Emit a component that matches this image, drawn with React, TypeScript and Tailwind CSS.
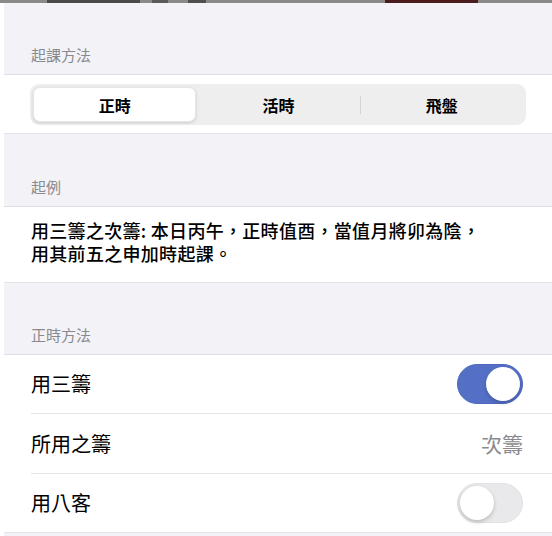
import { useState } from "react";

const FONT = {
  fontFamily: '"Noto Sans CJK TC", "Noto Sans", "Liberation Sans", sans-serif',
};

function SectionHeader({ title, tall = 72 }: { title: string; tall?: number }) {
  return (
    <div
      className="flex items-end bg-[#f2f2f7] px-[27px] pb-[8px] text-[15px] leading-[22px] text-[#8a8a8e] border-b border-[#dedee3]"
      style={{ height: tall }}
    >
      {title}
    </div>
  );
}

function Toggle({ on, onChange }: { on: boolean; onChange: (v: boolean) => void }) {
  return (
    <button
      onClick={() => onChange(!on)}
      className={
        on
          ? "relative h-[40px] w-[66px] rounded-full bg-[#5470c6] border border-[#4f69bf]"
          : "relative h-[40px] w-[66px] rounded-full bg-[#e9e9eb] border border-[#e2e2e4]"
      }
    >
      <span
        className={
          on
            ? "absolute top-[2px] right-[2px] h-[34px] w-[34px] rounded-full bg-white shadow-[0_2px_4px_rgba(0,0,0,0.2)]"
            : "absolute top-[2px] left-[2px] h-[34px] w-[34px] rounded-full bg-white shadow-[0_2px_4px_rgba(0,0,0,0.2)]"
        }
      />
    </button>
  );
}

const SEGMENTS = ["正時", "活時", "飛盤"];

export default function App() {
  const [seg, setSeg] = useState(0);
  const [useThree, setUseThree] = useState(true);
  const [useEight, setUseEight] = useState(false);

  return (
    <div className="h-[536px] w-[552px] overflow-hidden bg-white" style={FONT}>
      {/* 上端に見切れた画像の帯 */}
      <div className="flex h-[3px] bg-[#8a8a8a]">
        <div className="ml-[47px] w-[93px] bg-[#4a4a4a]" />
        <div className="ml-[12px] w-[16px] bg-[#5a5a5a]" />
        <div className="ml-[20px] w-[18px] bg-[#4f4f4f]" />
        <div className="ml-[179px] w-[93px] bg-[#4a1c1c]" />
      </div>

      <div className="ml-[4px]">
        <SectionHeader title="起課方法" tall={72} />
        <div className="bg-white px-[26px] pt-[9px] pb-[8px] border-b border-[#e4e4e8]">
          <div className="flex h-[41px] items-center rounded-[9px] bg-[#eeeeef] p-[3px]">
            {SEGMENTS.map((s, i) => (
              <div key={s} className="flex h-full flex-1 items-center">
                {i > 0 && (
                  <div
                    className={
                      seg === i || seg === i - 1
                        ? "h-[18px] w-px bg-transparent"
                        : "h-[18px] w-px bg-[#d4d4d6]"
                    }
                  />
                )}
                <button
                  onClick={() => setSeg(i)}
                  className={
                    seg === i
                      ? "flex h-full flex-1 items-center justify-center rounded-[7px] bg-white text-[16px] font-bold text-black shadow-[0_1px_3px_rgba(0,0,0,0.14)] border border-[#e6e6e6]"
                      : "flex h-full flex-1 items-center justify-center text-[16px] font-bold text-black"
                  }
                >
                  {s}
                </button>
              </div>
            ))}
          </div>
        </div>

        <SectionHeader title="起例" tall={73} />
        <div className="bg-white px-[27px] pt-[12px] pb-[17px] text-[18px] font-medium leading-[23px] tracking-[0.3px] text-black border-b border-[#e4e4e8]">
          用三籌之次籌: 本日丙午，正時值酉，當值月將卯為陰，
          <br />
          用其前五之申加時起課。
        </div>

        <SectionHeader title="正時方法" tall={72} />
        <div className="bg-white border-b border-[#e4e4e8]">
          <div className="flex h-[58px] items-center justify-between pl-[27px] pr-[29px]">
            <span className="text-[20px] text-black">用三籌</span>
            <Toggle on={useThree} onChange={setUseThree} />
          </div>
          <div className="ml-[27px] h-px bg-[#e4e4e8]" />
          <div className="flex h-[59px] items-center justify-between pl-[27px] pr-[29px]">
            <span className="text-[20px] text-black">所用之籌</span>
            <span className="text-[21px] text-[#8a8a8e]">次籌</span>
          </div>
          <div className="ml-[27px] h-px bg-[#e4e4e8]" />
          <div className="flex h-[58px] items-center justify-between pl-[27px] pr-[29px]">
            <span className="text-[20px] text-black">用八客</span>
            <Toggle on={useEight} onChange={setUseEight} />
          </div>
        </div>
        <div className="h-[10px] bg-[#f2f2f7]" />
      </div>
    </div>
  );
}
